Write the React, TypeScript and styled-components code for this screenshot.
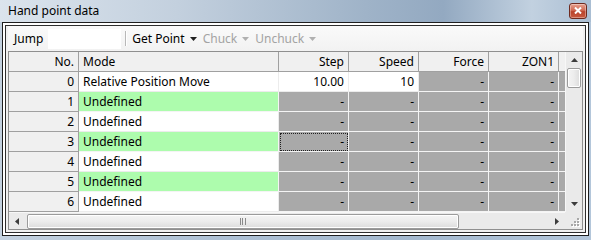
import React from "react";
import styled, { createGlobalStyle, css } from "styled-components";

const GlobalStyle = createGlobalStyle`
  html, body {
    margin: 0;
    padding: 0;
    background: #ffffff;
  }
  body {
    font-family: "Noto Sans", "Open Sans", Arial, sans-serif;
    font-size: 12px;
    color: #000000;
  }
`;

const COLS = "70px 200px 70px 70px 70px 70px 6px";

const Window = styled.div`
  box-sizing: border-box;
  width: 591px;
  height: 240px;
  display: flex;
  flex-direction: column;
  background: linear-gradient(90deg, #c3d1df 0%, #adc0d4 40%, #a4b9cf 70%, #b3c6da 100%);
  padding: 0 2px 4px 2px;
`;

const TitleBar = styled.div`
  height: 22px;
  flex: none;
  display: flex;
  align-items: center;
  justify-content: space-between;
  margin: 0 -2px;
  padding: 0 4px 0 8px;
  background: linear-gradient(90deg, #dbe4ed 0%, #c3d0de 30%, #9fb3c8 62%, #93a9c1 75%, #c2d1e0 90%, #aabed3 100%);
`;

const Title = styled.span`
  font-size: 12px;
  color: #000;
  line-height: 22px;
`;

const CloseButton = styled.div`
  box-sizing: border-box;
  width: 18px;
  height: 16px;
  margin-top: -1px;
  border: 1px solid #6e2a1f;
  border-radius: 3px;
  background: linear-gradient(180deg, #e7a08e 0%, #d06a54 45%, #b9432c 55%, #c95a40 100%);
  display: flex;
  align-items: center;
  justify-content: center;
  box-shadow: inset 0 0 0 1px rgba(255, 255, 255, 0.35);
`;

const OuterFrame = styled.div`
  flex: 1;
  display: flex;
  border: 1px solid #1e1e1e;
  background: #ffffff;
  padding: 2px;
`;

const Client = styled.div`
  flex: 1;
  display: flex;
  flex-direction: column;
  border: 1px solid #2e2e2e;
  background: #f0f0f0;
  padding: 0 2px 2px 2px;
`;

const Toolbar = styled.div`
  height: 25px;
  flex: none;
  display: flex;
  align-items: center;
  padding-left: 6px;
  background: linear-gradient(180deg, #fafafa 0%, #f2f2f2 100%);
`;

const ToolLabel = styled.span`
  margin-right: 5px;
`;

const JumpInput = styled.div`
  width: 73px;
  height: 20px;
  background: #ffffff;
`;

const ToolSep = styled.div`
  width: 1px;
  height: 15px;
  margin: 0 6px 0 4px;
  background: #b8b8b8;
  box-shadow: 1px 0 0 #ffffff;
`;

const DropItem = styled.div<{ $disabled?: boolean }>`
  display: flex;
  align-items: center;
  gap: 5px;
  margin-right: 6px;
  color: ${p => (p.$disabled ? "#a3a3a3" : "#000000")};
`;

const Caret = ({ color }: { color: string }) => (
  <svg width="7" height="4" viewBox="0 0 7 4">
    <path d="M0 0h7L3.5 4z" fill={color} />
  </svg>
);

const GridBox = styled.div`
  box-sizing: border-box;
  width: 575px;
  height: 179px;
  border: 1px solid #8f8f8f;
  display: grid;
  grid-template-columns: 556px 17px;
  grid-template-rows: 160px 17px;
  background: #ababab;
`;

const Sheet = styled.div`
  display: flex;
  flex-direction: column;
  overflow: hidden;
`;

const Row = styled.div`
  display: grid;
  grid-template-columns: ${COLS};
  height: 20px;
`;

type Kind = "head" | "rowhead" | "white" | "green" | "gray";

const kindStyles: Record<Kind, ReturnType<typeof css>> = {
  head: css`
    background: #f0f0f0;
    border-right: 1px solid #a0a0a0;
    border-bottom: 1px solid #a0a0a0;
  `,
  rowhead: css`
    background: #f0f0f0;
    border-right: 1px solid #a0a0a0;
    border-bottom: 1px solid #a0a0a0;
  `,
  white: css`
    background: #ffffff;
    border-right: 1px solid #ececec;
    border-bottom: 1px solid #ececec;
  `,
  green: css`
    background: #adfcad;
    border-right: 1px solid #f4f4f4;
    border-bottom: 1px solid #f4f4f4;
  `,
  gray: css`
    background: #a9a9a9;
    border-right: 1px solid #f4f4f4;
    border-bottom: 1px solid #f4f4f4;
  `,
};

const Cell = styled.div<{ $kind: Kind; $right?: boolean; $focus?: boolean }>`
  box-sizing: border-box;
  height: 20px;
  display: flex;
  align-items: center;
  justify-content: ${p => (p.$right ? "flex-end" : "flex-start")};
  padding: 0 4px 0 4px;
  white-space: nowrap;
  overflow: hidden;
  line-height: 19px;
  ${p => kindStyles[p.$kind]}
  ${p =>
    p.$focus &&
    css`
      outline: 1px dotted #202020;
      outline-offset: -2px;
    `}
`;

const VScroll = styled.div`
  display: flex;
  flex-direction: column;
  background: #eaeaea;
  border-left: 1px solid #f7f7f7;
`;

const HScroll = styled.div`
  display: flex;
  align-items: center;
  background: #eaeaea;
  border-top: 1px solid #f7f7f7;
`;

const ArrowBox = styled.div`
  flex: none;
  width: 16px;
  height: 16px;
  display: flex;
  align-items: center;
  justify-content: center;
`;

const Track = styled.div`
  flex: 1;
  display: flex;
  flex-direction: inherit;
`;

const VThumb = styled.div`
  box-sizing: border-box;
  margin: 0 1px;
  height: 20px;
  border: 1px solid #9b9b9b;
  border-radius: 2px;
  background: linear-gradient(90deg, #f4f4f4 0%, #ececec 50%, #dcdcdc 100%);
  box-shadow: inset 0 0 0 1px #ffffff;
`;

const HThumb = styled.div`
  box-sizing: border-box;
  width: 432px;
  height: 15px;
  margin-left: 2px;
  border: 1px solid #9b9b9b;
  border-radius: 2px;
  background: linear-gradient(180deg, #f4f4f4 0%, #ececec 50%, #dcdcdc 100%);
  box-shadow: inset 0 0 0 1px #ffffff;
  display: flex;
  align-items: center;
  justify-content: center;
`;

const Corner = styled.div`
  background: #eaeaea;
  display: flex;
  align-items: flex-end;
  justify-content: flex-end;
`;

const Tri = ({ dir }: { dir: "up" | "down" | "left" | "right" }) => {
  const d = {
    up: "M0 4h7L3.5 0z",
    down: "M0 0h7L3.5 4z",
    left: "M4 0v7L0 3.5z",
    right: "M0 0v7L4 3.5z",
  }[dir];
  const horiz = dir === "left" || dir === "right";
  return (
    <svg width={horiz ? 4 : 7} height={horiz ? 7 : 4} viewBox={horiz ? "0 0 4 7" : "0 0 7 4"}>
      <path d={d} fill="#3c3c3c" />
    </svg>
  );
};

const Grip = () => (
  <svg width="7" height="7" viewBox="0 0 7 7">
    {[0, 3, 6].map(x => (
      <rect key={x} x={x === 0 ? 0 : x - 1} y="0" width="1" height="7" fill="#8a8a8a" />
    ))}
  </svg>
);

const SizeGrip = () => (
  <svg width="12" height="12" viewBox="0 0 12 12" style={{ margin: "0 2px 2px 0" }}>
    {[
      [9, 3],
      [6, 6],
      [9, 6],
      [3, 9],
      [6, 9],
      [9, 9],
    ].map(([x, y]) => (
      <g key={`${x}-${y}`}>
        <rect x={x + 1} y={y + 1} width="2" height="2" fill="#ffffff" />
        <rect x={x} y={y} width="2" height="2" fill="#a8a8a8" />
      </g>
    ))}
  </svg>
);

type CellData = { text: string; kind: Kind; right?: boolean; focus?: boolean };

const header: CellData[] = [
  { text: "No.", kind: "head", right: true },
  { text: "Mode", kind: "head" },
  { text: "Step", kind: "head", right: true },
  { text: "Speed", kind: "head", right: true },
  { text: "Force", kind: "head", right: true },
  { text: "ZON1", kind: "head", right: true },
  { text: "", kind: "head" },
];

const rows: CellData[][] = [
  [
    { text: "0", kind: "rowhead", right: true },
    { text: "Relative Position Move", kind: "white" },
    { text: "10.00", kind: "white", right: true },
    { text: "10", kind: "white", right: true },
    { text: "-", kind: "gray", right: true },
    { text: "-", kind: "gray", right: true },
    { text: "", kind: "gray" },
  ],
  ...[1, 2, 3, 4, 5, 6].map(n => [
    { text: String(n), kind: "rowhead" as Kind, right: true },
    { text: "Undefined", kind: (n % 2 ? "green" : "white") as Kind },
    { text: "-", kind: "gray" as Kind, right: true, focus: n === 3 },
    { text: "-", kind: "gray" as Kind, right: true },
    { text: "-", kind: "gray" as Kind, right: true },
    { text: "-", kind: "gray" as Kind, right: true },
    { text: "", kind: "gray" as Kind },
  ]),
];

export default function App() {
  return (
    <>
      <GlobalStyle />
      <Window>
        <TitleBar>
          <Title>Hand point data</Title>
          <CloseButton>
            <svg width="8" height="7" viewBox="0 0 8 7">
              <path d="M1 0.5l6 6M7 0.5l-6 6" stroke="#ffffff" strokeWidth="2" />
            </svg>
          </CloseButton>
        </TitleBar>
        <OuterFrame>
          <Client>
            <Toolbar>
              <ToolLabel>Jump</ToolLabel>
              <JumpInput />
              <ToolSep />
              <DropItem>
                Get Point <Caret color="#202020" />
              </DropItem>
              <DropItem $disabled>
                Chuck <Caret color="#b0b0b0" />
              </DropItem>
              <DropItem $disabled>
                Unchuck <Caret color="#b0b0b0" />
              </DropItem>
            </Toolbar>
            <GridBox>
              <Sheet>
                <Row>
                  {header.map((c, i) => (
                    <Cell key={i} $kind={c.kind} $right={c.right}>
                      {c.text}
                    </Cell>
                  ))}
                </Row>
                {rows.map((r, ri) => (
                  <Row key={ri}>
                    {r.map((c, i) => (
                      <Cell key={i} $kind={c.kind} $right={c.right} $focus={c.focus}>
                        {c.text}
                      </Cell>
                    ))}
                  </Row>
                ))}
              </Sheet>
              <VScroll>
                <ArrowBox>
                  <Tri dir="up" />
                </ArrowBox>
                <Track>
                  <VThumb />
                </Track>
                <ArrowBox>
                  <Tri dir="down" />
                </ArrowBox>
              </VScroll>
              <HScroll>
                <ArrowBox>
                  <Tri dir="left" />
                </ArrowBox>
                <Track>
                  <HThumb>
                    <Grip />
                  </HThumb>
                </Track>
                <ArrowBox>
                  <Tri dir="right" />
                </ArrowBox>
              </HScroll>
              <Corner>
                <SizeGrip />
              </Corner>
            </GridBox>
          </Client>
        </OuterFrame>
      </Window>
    </>
  );
}
